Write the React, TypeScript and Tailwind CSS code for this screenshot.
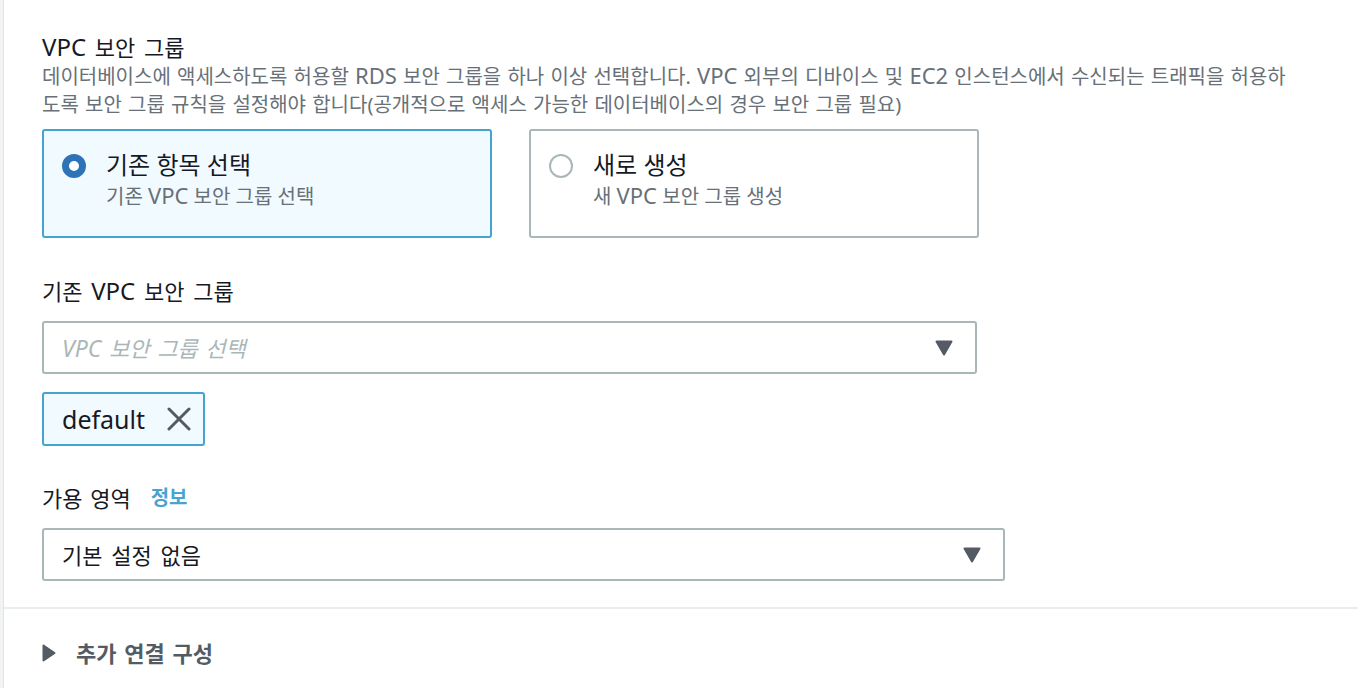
import React, { useState } from 'react';

const font = { fontFamily: '"Noto Sans", "Noto Sans CJK KR", sans-serif' };

// Latin runs render a bit bigger than hangul in the original UI font
function Mixed({ text, latin }: { text: string; latin: string }) {
  const parts = text.split(/([A-Za-z0-9]+)/);
  return (
    <>
      {parts.map((p, i) =>
        /^[A-Za-z0-9]+$/.test(p) ? (
          <span key={i} className={`leading-none ${latin}`}>
            {p}
          </span>
        ) : (
          <React.Fragment key={i}>{p}</React.Fragment>
        )
      )}
    </>
  );
}

function Caret() {
  return (
    <svg width="18" height="16" viewBox="0 0 18 16" className="shrink-0">
      <path d="M1.5 1.5 H16.5 L9 14.5 Z" fill="#545b64" stroke="#545b64" strokeWidth="2" strokeLinejoin="round" />
    </svg>
  );
}

function Radio({ checked }: { checked: boolean }) {
  return checked ? (
    <span className="block w-[24px] h-[24px] rounded-full border-[7px] border-[#2e73b8] bg-white shrink-0" />
  ) : (
    <span className="block w-[24px] h-[24px] rounded-full border-2 border-[#aab7b8] bg-white shrink-0" />
  );
}

export default function App() {
  const [mode, setMode] = useState<'existing' | 'new'>('existing');

  const options = [
    { key: 'existing' as const, title: '기존 항목 선택', desc: '기존 VPC 보안 그룹 선택' },
    { key: 'new' as const, title: '새로 생성', desc: '새 VPC 보안 그룹 생성' },
  ];

  return (
    <div className="w-[1358px] h-[688px] bg-white overflow-hidden flex [word-spacing:2px]" style={font}>
      <div className="w-[4px] bg-[#f2f3f3] border-r border-[#e1e4e4] shrink-0" />
      <div className="flex-1 flex flex-col">
        <div className="pl-[38px] pt-[33px] pr-[20px]">
          <h3 className="text-[22px] leading-[28px] text-[#16191f] [word-spacing:3px]">
            <Mixed text="VPC 보안 그룹" latin="text-[24px]" />
          </h3>
          <p className="mt-[2px] text-[20px] leading-[28px] text-[#687078] whitespace-nowrap [word-spacing:1px]">
            <Mixed
              text="데이터베이스에 액세스하도록 허용할 RDS 보안 그룹을 하나 이상 선택합니다. VPC 외부의 디바이스 및 EC2 인스턴스에서 수신되는 트래픽을 허용하"
              latin="text-[22px]"
            />
            <br />
            도록 보안 그룹 규칙을 설정해야 합니다(공개적으로 액세스 가능한 데이터베이스의 경우 보안 그룹 필요)
          </p>

          <div className="flex gap-[37px] mt-[10px]">
            {options.map((o) => {
              const active = mode === o.key;
              return (
                <button
                  key={o.key}
                  onClick={() => setMode(o.key)}
                  className={`w-[450px] h-[109px] rounded-[3px] border-2 text-left flex items-start pl-[18px] pt-[20px] gap-[20px] ${
                    active ? 'border-[#44a3cf] bg-[#f1faff]' : 'border-[#aab7b8] bg-white'
                  }`}
                >
                  <span className="mt-[3px] flex">
                    <Radio checked={active} />
                  </span>
                  <span className="flex flex-col">
                    <span className="text-[24px] leading-[28px] text-[#16191f]">{o.title}</span>
                    <span className="mt-[4px] text-[20px] leading-[28px] text-[#687078]">
                      <Mixed text={o.desc} latin="text-[22px]" />
                    </span>
                  </span>
                </button>
              );
            })}
          </div>

          <div className="mt-[39px] text-[22px] leading-[28px] text-[#16191f] [word-spacing:3px]">
            <Mixed text="기존 VPC 보안 그룹" latin="text-[24px]" />
          </div>
          <div className="mt-[16px] w-[935px] h-[53px] rounded-[3px] border-2 border-[#aab7b8] flex items-center justify-between pl-[18px] pr-[22px]">
            <span className="text-[22px] leading-[28px] italic text-[#aab7b8]">
              <Mixed text="VPC 보안 그룹 선택" latin="text-[23px]" />
            </span>
            <Caret />
          </div>

          <div className="mt-[18px] inline-flex items-center h-[54px] pl-[18px] pr-[12px] gap-[22px] rounded-[3px] border-2 border-[#44a3cf] bg-[#f1faff]">
            <span className="text-[25px] leading-[28px] text-[#16191f]">default</span>
            <svg width="24" height="24" viewBox="0 0 24 24">
              <path d="M2 2 L22 22 M22 2 L2 22" stroke="#545b64" strokeWidth="3" strokeLinecap="round" />
            </svg>
          </div>

          <div className="mt-[38px] flex items-center gap-[20px]">
            <span className="text-[22px] leading-[28px] text-[#16191f]">가용 영역</span>
            <span className="text-[20px] leading-[28px] font-bold text-[#4aa3cf]">정보</span>
          </div>
          <div className="mt-[16px] w-[963px] h-[53px] rounded-[3px] border-2 border-[#aab7b8] flex items-center justify-between pl-[18px] pr-[22px]">
            <span className="text-[22px] leading-[28px] text-[#16191f] [word-spacing:3px]">기본 설정 없음</span>
            <Caret />
          </div>
        </div>

        <div className="mt-[26px] h-[2px] bg-[#eaeded]" />

        <div className="pl-[38px] pt-[30px] flex items-center gap-[20px]">
          <svg width="14" height="18" viewBox="0 0 14 18">
            <path d="M1.5 1.5 L12.5 9 L1.5 16.5 Z" fill="#545b64" stroke="#545b64" strokeWidth="2" strokeLinejoin="round" />
          </svg>
          <span className="text-[22px] leading-[28px] font-bold text-[#545b64]">추가 연결 구성</span>
        </div>
      </div>
    </div>
  );
}
